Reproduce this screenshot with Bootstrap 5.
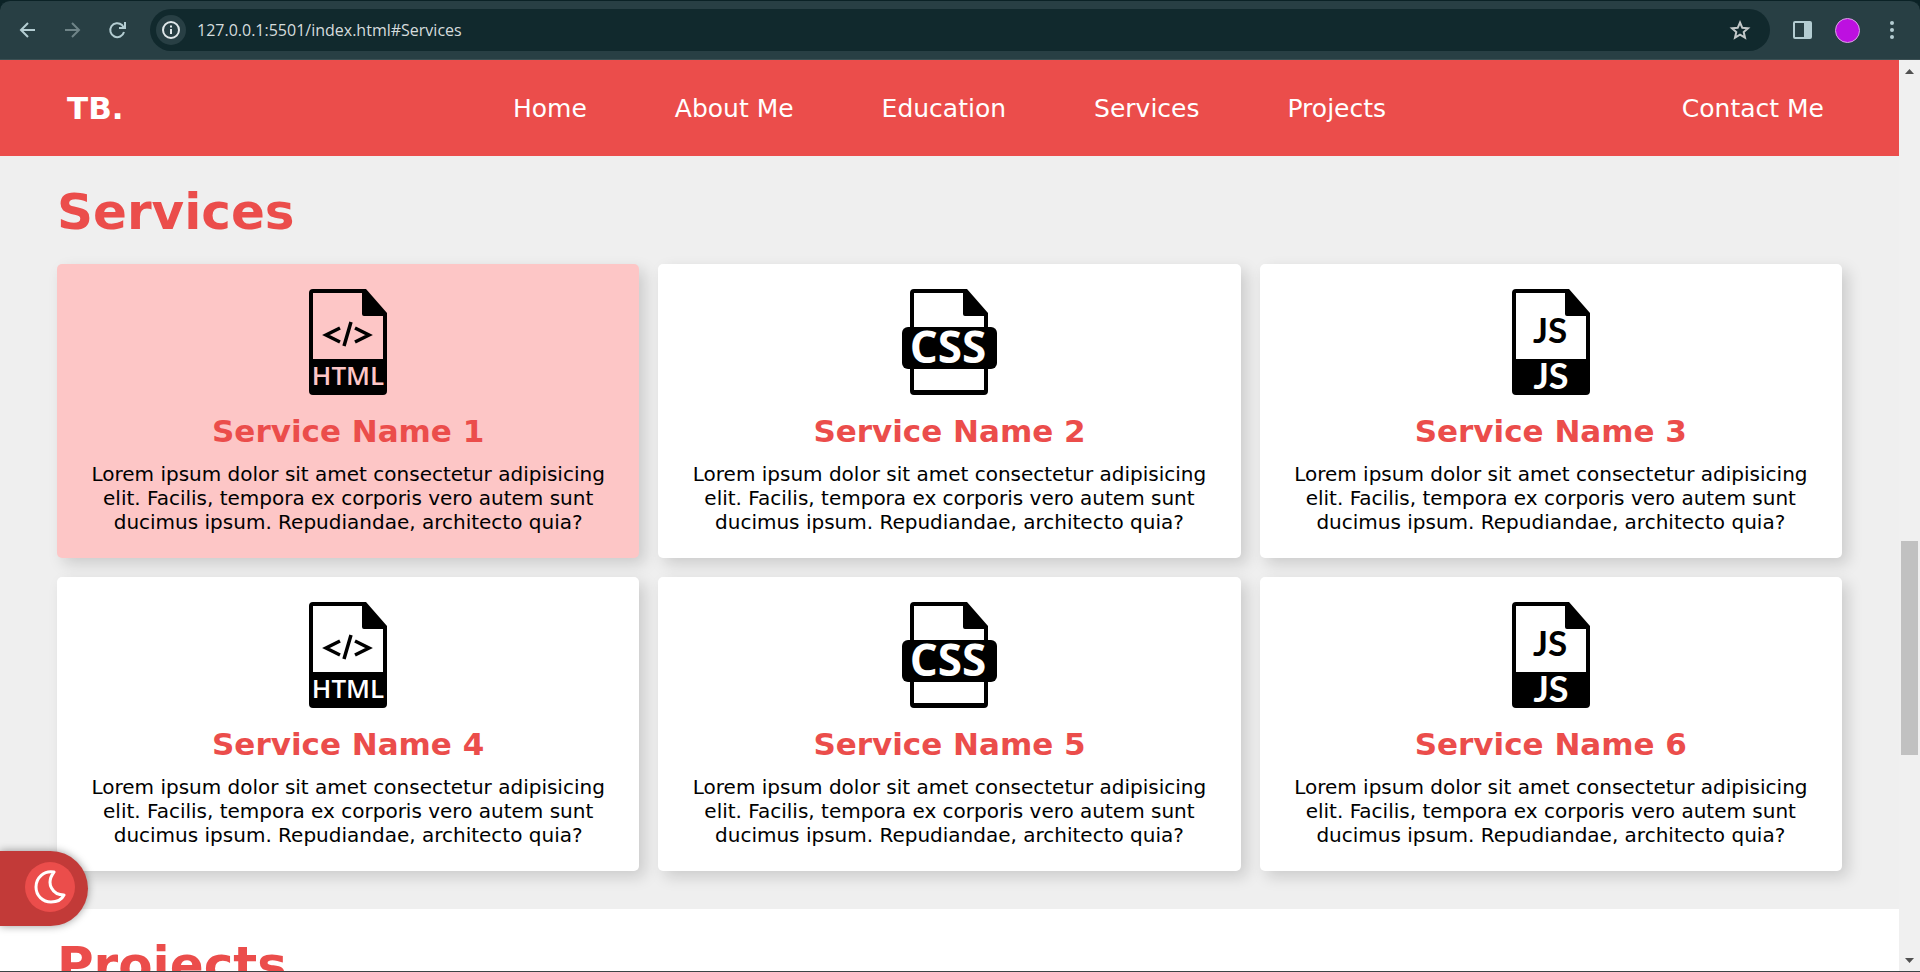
<!DOCTYPE html>
<html lang="en">
<head>
<meta charset="utf-8">
<meta name="viewport" content="width=device-width, initial-scale=1">
<title>Services</title>
<link rel="stylesheet" href="https://cdn.jsdelivr.net/npm/bootstrap@5.3.0/dist/css/bootstrap.min.css">
<style>
:root { --brand: #eb4d4b; --brand-dark: #c23a38; --chrome: #283f44; --chrome-ink: #b4cdd2; }
body { font-family: "DejaVu Sans", Verdana, sans-serif; color: #000; background: #0b2226; }
.browser-bar { height: 60px; background: var(--chrome); border-top: 1px solid #0b2226; border-bottom: 1px solid #3c5054; border-radius: 10px 10px 0 0; padding: 0 13px 0 12px; }
.browser-bar .tool { color: var(--chrome-ink); background: none; border: 0; padding: 0; width: 30px; height: 30px; }
.browser-bar .tool:disabled { color: #6f8488; }
.tool-group { gap: 15px; }
.address { height: 42px; background: #11292d; border-radius: 21px; padding: 0 15px 0 6px; margin: 0 17px 0 18px; }
.address .info { width: 30px; height: 30px; border-radius: 50%; background: var(--chrome); color: #e0e8ea; margin-right: 11px; }
.address input { background: none; border: 0; outline: 0; color: #d5dcdd; font: 16px/24px "Open Sans", "Noto Sans", sans-serif; min-width: 0; padding: 0; }
.address .tool { color: #c3c8c9; }
.profile-dot { width: 25px; height: 25px; border-radius: 50%; background: #bd10e0; border: 1px solid #d9a5e4; padding: 0; margin: 0 2px 0 3px; }
.page-view { overflow: hidden; background: #fff; }
.site-nav { background: var(--brand); height: 96px; padding: 2px 67px 0; }
.site-nav a { color: #fff; text-decoration: none; font-size: 25px; line-height: 30px; white-space: nowrap; }
.site-nav a.brand-name { font-size: 31px; font-weight: 700; }
.nav-links { gap: 88px; }
.band { padding: 26px 3% 38px; }
.band-grey { background: #efefef; }
.band h2 { color: var(--brand); font-size: 50px; line-height: 60px; font-weight: 700; margin: 0 0 22px; }
.services-row { --bs-gutter-x: 19px; --bs-gutter-y: 19px; }
.service-box { --box: #fff; background: var(--box); border: 0; border-radius: 5px; padding: 25px 30px 24px; text-align: center; box-shadow: 6px 6px 15px rgba(0,0,0,.15); }
.service-box.is-hovered { --box: #fdc6c6; }
.service-box svg { width: 96px; height: 106px; margin: 0 auto 17px; }
.service-box h3 { color: var(--brand); font-size: 31px; line-height: 38px; font-weight: 700; margin: 0 0 12px; }
.service-box p { font-size: 20px; line-height: 24px; margin: 0; }
.service-box .cut { fill: var(--box); }
.service-box text { text-anchor: middle; font-family: "Open Sans", "Noto Sans", sans-serif; font-weight: 700; }
.service-box text.semi { font-weight: 600; }
.service-box text.js { font-family: Lato, sans-serif; }
.scroll-rail { width: 21px; background: #f0f0f0; color: #505050; padding: 9px 2px 8px; }
.scroll-thumb { width: 17px; background: #c1c1c1; }
.theme-switch { left: 0; bottom: 46px; width: 88px; height: 75px; background: var(--brand-dark); border: 0; border-radius: 0 44px 44px 0; padding: 0 13px 4px 0; box-shadow: 0 0 8px rgba(0,0,0,.4); }
.theme-switch .knob { width: 50px; height: 50px; border-radius: 50%; background: var(--brand); }
.window-edge { height: 1px; background: #3b4446; }
</style>
<script src="https://cdn.jsdelivr.net/npm/bootstrap@5.3.0/dist/js/bootstrap.bundle.min.js"></script>
</head>
<body class="vh-100 overflow-hidden d-flex flex-column">
<svg class="d-none" aria-hidden="true">
  <symbol id="sheet" viewBox="0 0 96 106">
    <path fill-rule="evenodd" d="M13 0H66L87 24V102Q87 106 83 106H13Q9 106 9 102V4Q9 0 13 0ZM13 4V101H83V27H64Q62 27 62 25V4Z"/>
  </symbol>
</svg>
<header class="browser-bar d-flex align-items-center flex-shrink-0">
  <div class="tool-group d-flex">
    <button class="tool" aria-label="Back"><svg width="30" height="30" fill="none" stroke="currentColor" stroke-width="2"><path d="M23 15H9M16 8L9 15L16 22"/></svg></button>
    <button class="tool" aria-label="Forward" disabled><svg width="30" height="30" fill="none" stroke="currentColor" stroke-width="2"><path d="M8 15H22M15 8L22 15L15 22"/></svg></button>
    <button class="tool" aria-label="Reload"><svg width="30" height="30" fill="none" stroke="currentColor" stroke-width="2"><path d="M22 17A7 7 0 1 1 20 10L22 13M23 7V13H17"/></svg></button>
  </div>
  <div class="address flex-fill d-flex align-items-center">
    <span class="info d-flex"><svg width="30" height="30" fill="none" stroke="currentColor" stroke-width="2"><circle cx="15" cy="15" r="8"/><path d="M15 14V19M15 10.500V12.500"/></svg></span>
    <input class="flex-fill" type="text" aria-label="Address" value="127.0.0.1:5501/index.html#Services">
    <button class="tool" aria-label="Bookmark"><svg width="30" height="30" fill="none" stroke="currentColor" stroke-width="2"><path d="M15 7.500L17.300 12.800L23 13.300L18.700 17L20 22.700L15 19.700L10 22.700L11.300 17L7 13.300L12.700 12.800Z"/></svg></button>
  </div>
  <div class="tool-group d-flex align-items-center">
    <button class="tool" aria-label="Side panel"><svg width="30" height="30"><path fill="currentColor" fill-rule="evenodd" d="M8 6H23Q25 6 25 8V22Q25 24 23 24H8Q6 24 6 22V8Q6 6 8 6ZM8 8V22H17V8Z"/></svg></button>
    <button class="profile-dot" aria-label="Profile"></button>
    <button class="tool" aria-label="Menu"><svg width="30" height="30" fill="currentColor"><circle cx="15" cy="8" r="2"/><circle cx="15" cy="15" r="2"/><circle cx="15" cy="22" r="2"/></svg></button>
  </div>
</header>
<div class="d-flex flex-fill" style="min-height:0">
  <div class="page-view flex-fill">
    <nav class="site-nav d-flex align-items-center">
      <div class="col"><a class="brand-name" href="#">TB.</a></div>
      <div class="nav-links d-flex">
        <a href="#Home">Home</a><a href="#About">About Me</a><a href="#Education">Education</a><a href="#Services">Services</a><a href="#Projects">Projects</a>
      </div>
      <div class="col text-end"><a class="pe-2" href="#Contact">Contact Me</a></div>
    </nav>
    <main>
      <section class="band band-grey">
        <h2>Services</h2>
        <div class="row row-cols-3 services-row">
          <div class="col"><article class="card service-box is-hovered">
            <svg viewBox="0 0 96 106" aria-hidden="true"><use href="#sheet"/><path d="M11 70H84V104H11Z"/><path d="M40 39L26 46L40 53M55 39L69 46L55 53M51 33L44 57" fill="none" stroke="#000" stroke-width="3.500"/><text class="cut semi" x="48" y="96" font-size="26">HTML</text></svg>
            <h3>Service Name 1</h3><p>Lorem ipsum dolor sit amet consectetur adipisicing elit. Facilis, tempora ex corporis vero autem sunt ducimus ipsum. Repudiandae, architecto quia?</p>
          </article></div>
          <div class="col"><article class="card service-box">
            <svg viewBox="0 0 96 106" aria-hidden="true"><use href="#sheet"/><rect x="1" y="38" width="95" height="42" rx="6"/><text class="cut" x="47" y="74" font-size="44">CSS</text></svg>
            <h3>Service Name 2</h3><p>Lorem ipsum dolor sit amet consectetur adipisicing elit. Facilis, tempora ex corporis vero autem sunt ducimus ipsum. Repudiandae, architecto quia?</p>
          </article></div>
          <div class="col"><article class="card service-box">
            <svg viewBox="0 0 96 106" aria-hidden="true"><use href="#sheet"/><path d="M11 70H84V104H11Z"/><text class="js" x="47" y="54" font-size="35">JS</text><text class="cut js" x="48" y="100" font-size="36">JS</text></svg>
            <h3>Service Name 3</h3><p>Lorem ipsum dolor sit amet consectetur adipisicing elit. Facilis, tempora ex corporis vero autem sunt ducimus ipsum. Repudiandae, architecto quia?</p>
          </article></div>
          <div class="col"><article class="card service-box">
            <svg viewBox="0 0 96 106" aria-hidden="true"><use href="#sheet"/><path d="M11 70H84V104H11Z"/><path d="M40 39L26 46L40 53M55 39L69 46L55 53M51 33L44 57" fill="none" stroke="#000" stroke-width="3.500"/><text class="cut semi" x="48" y="96" font-size="26">HTML</text></svg>
            <h3>Service Name 4</h3><p>Lorem ipsum dolor sit amet consectetur adipisicing elit. Facilis, tempora ex corporis vero autem sunt ducimus ipsum. Repudiandae, architecto quia?</p>
          </article></div>
          <div class="col"><article class="card service-box">
            <svg viewBox="0 0 96 106" aria-hidden="true"><use href="#sheet"/><rect x="1" y="38" width="95" height="42" rx="6"/><text class="cut" x="47" y="74" font-size="44">CSS</text></svg>
            <h3>Service Name 5</h3><p>Lorem ipsum dolor sit amet consectetur adipisicing elit. Facilis, tempora ex corporis vero autem sunt ducimus ipsum. Repudiandae, architecto quia?</p>
          </article></div>
          <div class="col"><article class="card service-box">
            <svg viewBox="0 0 96 106" aria-hidden="true"><use href="#sheet"/><path d="M11 70H84V104H11Z"/><text class="js" x="47" y="54" font-size="35">JS</text><text class="cut js" x="48" y="100" font-size="36">JS</text></svg>
            <h3>Service Name 6</h3><p>Lorem ipsum dolor sit amet consectetur adipisicing elit. Facilis, tempora ex corporis vero autem sunt ducimus ipsum. Repudiandae, architecto quia?</p>
          </article></div>
        </div>
      </section>
      <section class="band"><h2>Projects</h2></section>
    </main>
  </div>
  <div class="scroll-rail d-flex flex-column align-items-center flex-shrink-0" aria-hidden="true">
    <svg width="9" height="5" fill="currentColor"><path d="M0 5L4.500 0L9 5Z"/></svg>
    <div style="flex:467 0 0"></div>
    <div class="scroll-thumb" style="flex:214 0 0"></div>
    <div style="flex:203 0 0"></div>
    <svg width="9" height="5" fill="currentColor"><path d="M0 0L4.500 5L9 0Z"/></svg>
  </div>
</div>
<div class="window-edge flex-shrink-0"></div>
<button class="theme-switch position-fixed d-flex align-items-center justify-content-end" aria-label="Dark mode">
  <span class="knob d-flex align-items-center justify-content-center"><svg width="32" height="34" fill="none" stroke="#fff" stroke-width="3" stroke-linejoin="round"><path d="M20 2C10 0 2 8 2 17C2 26 9 32 17 32C23 32 28 29 30 25C19 25 11 14 20 2Z"/></svg></span>
</button>
</body>
</html>
